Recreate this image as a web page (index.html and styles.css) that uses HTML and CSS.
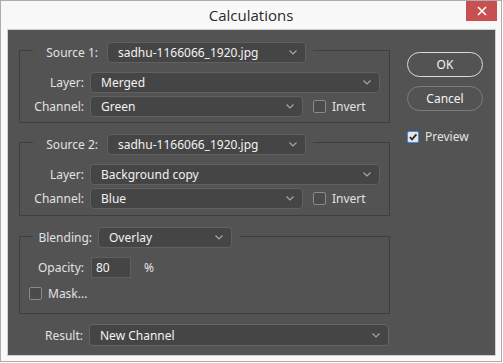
FILE: index.html
```html
<!DOCTYPE html>
<html>
<head>
<meta charset="utf-8">
<link rel="stylesheet" href="styles.css">
</head>
<body>
<div class="window">
  <div class="titlebar">
    <span></span>
    <span class="title">Calculations</span>
    <span class="close"><svg width="10" height="10" viewBox="0 0 10 10"><path d="M1 1L9 9M9 1L1 9" stroke="#fff" stroke-width="1.6"/></svg></span>
  </div>
  <div class="panel">
    <div class="main">
      <div class="group g1">
        <div class="ghead">
          <span class="hlabel src">Source 1:</span>
          <div class="select w-src"><span>sadhu-1166066_1920.jpg</span><svg class="chev" width="8" height="5" viewBox="0 0 8 5"><path d="M0.5 0.5L4 4L7.5 0.5" fill="none" stroke="#a8a8a8" stroke-width="1.1"/></svg></div>
        </div>
        <div class="row r-first"><span class="lbl">Layer:</span><div class="select w-full"><span>Merged</span><svg class="chev" width="8" height="5" viewBox="0 0 8 5"><path d="M0.5 0.5L4 4L7.5 0.5" fill="none" stroke="#a8a8a8" stroke-width="1.1"/></svg></div></div>
        <div class="row r-next"><span class="lbl">Channel:</span><div class="select w-ch"><span>Green</span><svg class="chev" width="8" height="5" viewBox="0 0 8 5"><path d="M0.5 0.5L4 4L7.5 0.5" fill="none" stroke="#a8a8a8" stroke-width="1.1"/></svg></div><span class="check inv"><span class="box"></span>Invert</span></div>
      </div>
      <div class="group g2">
        <div class="ghead">
          <span class="hlabel src">Source 2:</span>
          <div class="select w-src"><span>sadhu-1166066_1920.jpg</span><svg class="chev" width="8" height="5" viewBox="0 0 8 5"><path d="M0.5 0.5L4 4L7.5 0.5" fill="none" stroke="#a8a8a8" stroke-width="1.1"/></svg></div>
        </div>
        <div class="row r-first"><span class="lbl">Layer:</span><div class="select w-full"><span>Background copy</span><svg class="chev" width="8" height="5" viewBox="0 0 8 5"><path d="M0.5 0.5L4 4L7.5 0.5" fill="none" stroke="#a8a8a8" stroke-width="1.1"/></svg></div></div>
        <div class="row r-next"><span class="lbl">Channel:</span><div class="select w-ch"><span>Blue</span><svg class="chev" width="8" height="5" viewBox="0 0 8 5"><path d="M0.5 0.5L4 4L7.5 0.5" fill="none" stroke="#a8a8a8" stroke-width="1.1"/></svg></div><span class="check inv"><span class="box"></span>Invert</span></div>
      </div>
      <div class="group g3">
        <div class="ghead blend">
          <span class="hlabel bl">Blending:</span>
          <div class="select w-bl"><span>Overlay</span><svg class="chev" width="8" height="5" viewBox="0 0 8 5"><path d="M0.5 0.5L4 4L7.5 0.5" fill="none" stroke="#a8a8a8" stroke-width="1.1"/></svg></div>
        </div>
        <div class="row r-first"><span class="lbl">Opacity:</span><div class="textbox">80</div><span class="pct">%</span></div>
        <div class="row r-mask"><span class="check mask"><span class="box"></span>Mask...</span></div>
      </div>
      <div class="row result"><span class="lbl">Result:</span><div class="select w-res"><span>New Channel</span><svg class="chev" width="8" height="5" viewBox="0 0 8 5"><path d="M0.5 0.5L4 4L7.5 0.5" fill="none" stroke="#a8a8a8" stroke-width="1.1"/></svg></div></div>
    </div>
    <div class="side">
      <div class="btn ok">OK</div>
      <div class="btn cancel">Cancel</div>
      <span class="check preview"><span class="box on"><svg width="10" height="10" viewBox="0 0 10 10"><path d="M1.8 5L4 7.4L8.4 2.4" fill="none" stroke="#2a2a2a" stroke-width="1.8"/></svg></span>Preview</span>
    </div>
  </div>
</div>
</body>
</html>
```

FILE: styles.css
```css
html, body {
  margin: 0;
  padding: 0;
  background: #ffffff;
}
.window {
  width: 502px;
  height: 362px;
  box-sizing: border-box;
  border: 1px solid #adadad;
  background: #f8f8f8;
  font-family: "Noto Sans", "Open Sans", sans-serif;
  font-size: 12px;
}
.titlebar {
  height: 28px;
  display: grid;
  grid-template-columns: 1fr auto 1fr;
}
.title {
  font-family: "Open Sans", "Noto Sans", sans-serif;
  font-size: 15px;
  line-height: 29px;
  color: #2a2a2a;
}
.close {
  justify-self: end;
  width: 31px;
  height: 20px;
  margin-right: 4px;
  background: #c75050;
  display: flex;
  align-items: center;
  justify-content: center;
}
.panel {
  margin-left: 6px;
  width: 489px;
  height: 327px;
  box-sizing: border-box;
  border: 1px solid #cfcfcf;
  background: #535353;
  display: flex;
  color: #e2e2e2;
}
.main {
  width: 384px;
  box-sizing: border-box;
  padding: 20px 0 0 11px;
}
.group {
  width: 371px;
  box-sizing: border-box;
  border: 1px solid #3f3f3f;
  padding-bottom: 5px;
}
.g2 { margin-top: 19px; padding-bottom: 6px; }
.g3 { margin-top: 20px; padding-bottom: 9px; }
.ghead {
  display: flex;
  align-items: center;
  width: fit-content;
  margin: -9px 0 0 13px;
  padding-right: 7px;
  background: #535353;
  gap: 9px;
}
.ghead.blend {
  margin-top: -10px;
  padding-right: 8px;
  gap: 6px;
}
.hlabel { text-align: right; }
.hlabel.src { width: 65px; }
.hlabel.bl { width: 59px; }
.row {
  display: flex;
  align-items: center;
  height: 21px;
}
.r-first { margin-top: 9px; }
.r-next { margin-top: 3px; }
.r-mask { margin-top: 5px; }
.lbl {
  width: 64px;
  text-align: right;
  margin-right: 6px;
}
.select {
  height: 21px;
  box-sizing: border-box;
  border: 1px solid #606060;
  border-radius: 4px;
  background: #454545;
  display: flex;
  align-items: center;
  justify-content: space-between;
  padding: 0 8px 0 10px;
  color: #f2f2f2;
}
.chev { display: block; }
.w-src { width: 199px; }
.w-full { width: 290px; }
.w-ch { width: 213px; }
.w-bl { width: 134px; }
.w-res { width: 300px; height: 22px; border-color: #666; }
.result { margin-top: 10px; height: 22px; }
.textbox {
  width: 40px;
  height: 21px;
  box-sizing: border-box;
  margin-left: 1px;
  border: 1px solid #5e5e5e;
  background: #454545;
  padding-left: 4px;
  line-height: 19px;
  color: #f2f2f2;
}
.pct { margin-left: 13px; }
.check {
  display: flex;
  align-items: center;
  gap: 6px;
}
.box {
  width: 13px;
  height: 13px;
  box-sizing: border-box;
  border: 1px solid #8a8a8a;
  border-radius: 2px;
  background: #4b4b4b;
  display: flex;
  align-items: center;
  justify-content: center;
}
.inv { margin-left: 10px; }
.mask { margin-left: 9px; }
.side {
  padding: 22px 0 0 15px;
  display: flex;
  flex-direction: column;
  align-items: flex-start;
}
.btn {
  width: 76px;
  height: 25px;
  box-sizing: border-box;
  border-radius: 13px;
  display: flex;
  align-items: center;
  justify-content: center;
  color: #f2f2f2;
}
.ok { border: 1.5px solid #dadada; }
.cancel { margin-top: 9px; border: 1px solid #7c7c7c; }
.preview { margin-top: 17px; }
.box.on {
  width: 12px;
  height: 12px;
  border: 1px solid #3d8ee6;
  background: #e6e6e6;
}
```
